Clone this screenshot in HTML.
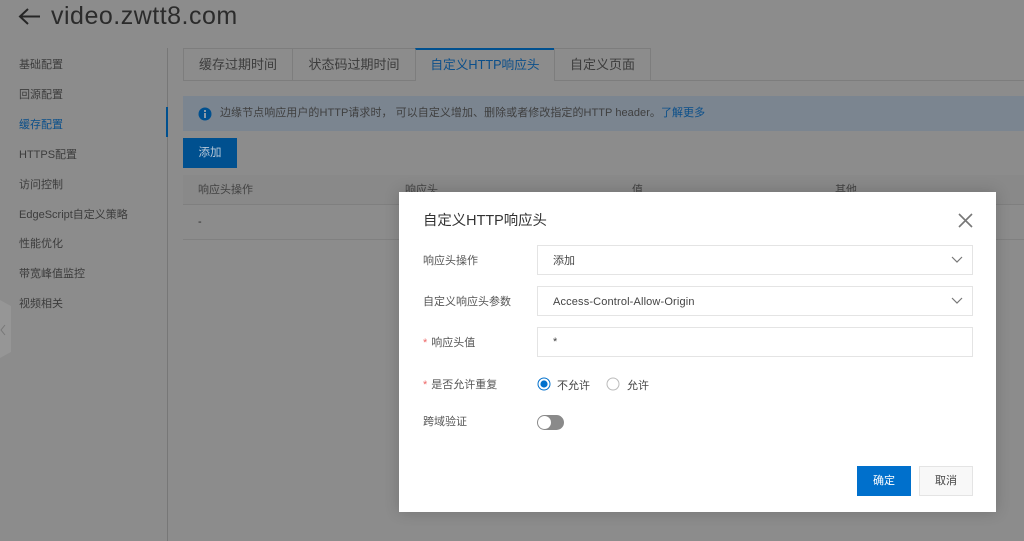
<!DOCTYPE html>
<html lang="zh"><head><meta charset="utf-8"><title>video.zwtt8.com</title>
<style>
html,body{margin:0;padding:0;background:#8c8c8c}
#p{width:1024px;height:541px;overflow:hidden;position:relative;background:#8c8c8c;font-family:"Liberation Sans","Noto Sans CJK SC",sans-serif;font-size:11px;color:#3a3a3a;filter:blur(.35px)}
.a{position:absolute;white-space:nowrap;line-height:16px}
.nav{left:19px;color:#3c3c3c;font-size:11px}
.tab{top:48px;height:32px;line-height:32px;text-align:center;box-sizing:border-box;position:absolute;border:1px solid #7d7d7d;border-bottom:0;font-size:13px;color:#3c3c3c;background:#8c8c8c;white-space:nowrap}
.th{top:182px;color:#424242;font-size:11px}
.label{color:#555;font-size:11px}
.input{position:absolute;left:537px;width:436px;height:30px;box-sizing:border-box;border:1px solid #e4e4e4;background:#fff;color:#444;font-size:11px;line-height:28px;padding-left:15px}
.chev{position:absolute;right:9px;top:9px}
</style></head><body><div id="p">
<svg class="a" style="left:18px;top:7px" width="23" height="18" viewBox="0 0 23 18"><path d="M22 9.5H2M10 2 2 9.5 10 17" fill="none" stroke="#262626" stroke-width="2"/></svg>
<div class="a" style="left:51px;top:1px;font-size:25px;line-height:30px;color:#2b2b2b;letter-spacing:.5px">video.zwtt8.com</div>

<div class="a nav" style="top:57px">基础配置</div>
<div class="a nav" style="top:87px">回源配置</div>
<div class="a nav" style="top:117px;color:#0b4f8a">缓存配置</div>
<div class="a nav" style="top:147px">HTTPS配置</div>
<div class="a nav" style="top:177px">访问控制</div>
<div class="a nav" style="top:207px">EdgeScript自定义策略</div>
<div class="a nav" style="top:236px">性能优化</div>
<div class="a nav" style="top:266px">带宽峰值监控</div>
<div class="a nav" style="top:296px">视频相关</div>
<div style="position:absolute;left:167px;top:48px;width:1px;height:493px;background:#777"></div>
<div style="position:absolute;left:166px;top:107px;width:2px;height:30px;background:#00508f"></div>
<svg class="a" style="left:0;top:300px" width="11" height="58" viewBox="0 0 11 58"><path d="M0 0 11 6V52L0 58Z" fill="#969696"/><path d="M5 25 1 30 5 35" fill="none" stroke="#777" stroke-width="1"/></svg>

<div style="position:absolute;left:183px;top:80px;width:841px;height:1px;background:#7d7d7d"></div>
<div class="tab" style="left:183px;width:110px">缓存过期时间</div>
<div class="tab" style="left:292px;width:124px">状态码过期时间</div>
<div class="tab" style="left:415px;width:140px;height:33px;border-top:2px solid #00508f;line-height:30px;color:#0b4f8a;font-size:12.7px">自定义HTTP响应头</div>
<div class="tab" style="left:554px;width:97px">自定义页面</div>

<div style="position:absolute;left:183px;top:96px;width:841px;height:35px;background:#7b8590"></div>
<svg class="a" style="left:198px;top:107px" width="14" height="14" viewBox="0 0 14 14"><circle cx="7" cy="7" r="6.5" fill="#00508f"/><rect x="6" y="6" width="2" height="5" fill="#8c9aa8"/><rect x="6" y="3" width="2" height="2" fill="#8c9aa8"/></svg>
<div class="a" style="left:220px;top:105px;color:#3f3f3f;font-size:11px;letter-spacing:.05px">边缘节点响应用户的HTTP请求时， 可以自定义增加、删除或者修改指定的HTTP header。<span style="color:#0b4f8a">了解更多</span></div>

<div class="a" style="left:183px;top:138px;width:54px;height:30px;background:#00508f;color:#b8c8d8;text-align:center;line-height:30px;font-size:11.5px">添加</div>

<div style="position:absolute;left:183px;top:175px;width:841px;height:29px;background:#898989;border-bottom:1px solid #7f7f7f"></div>
<div class="a th" style="left:198px">响应头操作</div>
<div class="a th" style="left:405px">响应头</div>
<div class="a th" style="left:632px">值</div>
<div class="a th" style="left:835px">其他</div>
<div class="a" style="left:198px;top:214px;color:#2c2c2c">-</div>
<div style="position:absolute;left:183px;top:239px;width:841px;height:1px;background:#808080"></div>

<div style="position:absolute;left:399px;top:192px;width:597px;height:320px;background:#fff;box-shadow:0 0 14px rgba(0,0,0,.18)"></div>
<div class="a" style="left:423px;top:211px;font-size:14.4px;line-height:20px;color:#333">自定义HTTP响应头</div>
<svg class="a" style="left:958px;top:213px" width="15" height="15" viewBox="0 0 15 15"><path d="M1 1 14 14M14 1 1 14" stroke="#777" stroke-width="1.6" fill="none"/></svg>

<div class="a label" style="left:423px;top:253px">响应头操作</div>
<div class="input" style="top:245px;line-height:31px">添加<svg class="chev" width="12" height="10" viewBox="0 0 12 10"><path d="M1 2 6 7 11 2" fill="none" stroke="#777" stroke-width="1.2"/></svg></div>
<div class="a label" style="left:423px;top:294px">自定义响应头参数</div>
<div class="input" style="top:286px;line-height:31px;letter-spacing:.15px">Access-Control-Allow-Origin<svg class="chev" width="12" height="10" viewBox="0 0 12 10"><path d="M1 2 6 7 11 2" fill="none" stroke="#777" stroke-width="1.2"/></svg></div>
<div class="a label" style="left:423px;top:335px"><span style="color:#e66;margin-right:4px">*</span>响应头值</div>
<div class="input" style="top:327px">*</div>

<div class="a label" style="left:423px;top:377px"><span style="color:#e66;margin-right:4px">*</span>是否允许重复</div>
<svg class="a" style="left:537px;top:377px" width="14" height="14" viewBox="0 0 14 14"><circle cx="7" cy="7" r="6" fill="#fff" stroke="#0070cc" stroke-width="1"/><circle cx="7" cy="7" r="3.6" fill="#0070cc"/></svg>
<div class="a label" style="left:557px;top:378px;color:#444">不允许</div>
<svg class="a" style="left:606px;top:377px" width="14" height="14" viewBox="0 0 14 14"><circle cx="7" cy="7" r="6" fill="#fff" stroke="#bbb" stroke-width="1"/></svg>
<div class="a label" style="left:627px;top:378px;color:#444">允许</div>

<div class="a label" style="left:423px;top:414px">跨域验证</div>
<div style="position:absolute;left:537px;top:415px;width:27px;height:15px;border-radius:8px;background:#8a8a8a"></div>
<div style="position:absolute;left:538px;top:416px;width:13px;height:13px;border-radius:50%;background:#fff"></div>

<div class="a" style="left:857px;top:466px;width:54px;height:30px;background:#0070cc;color:#fff;text-align:center;line-height:31px;font-size:11px">确定</div>
<div class="a" style="left:919px;top:466px;width:54px;height:30px;box-sizing:border-box;background:#f8f8f8;border:1px solid #e4e4e4;color:#444;text-align:center;line-height:29px;font-size:11px">取消</div>
</div></body></html>
